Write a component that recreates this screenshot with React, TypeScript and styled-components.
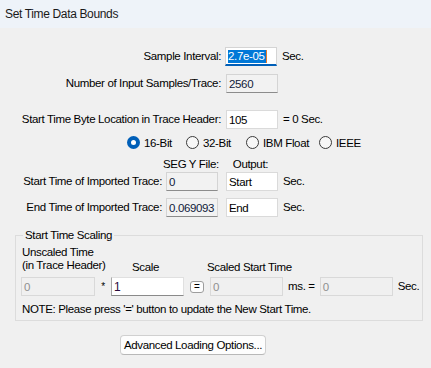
import React from "react";
import styled, { createGlobalStyle, css } from "styled-components";

const Global = createGlobalStyle`
  html, body { margin: 0; padding: 0; background: #f0f0f0; }
  body {
    font-family: "Liberation Sans", Arial, sans-serif;
    font-size: 11.5px;
    letter-spacing: -0.35px;
    color: #000;
  }
`;

const Window = styled.div`
  width: 431px;
  height: 368px;
  background: #f0f0f0;
  overflow: hidden;
  display: flex;
  flex-direction: column;
`;

const TitleBar = styled.div`
  height: 28px;
  flex: none;
  background: #eef3f9;
  padding-left: 5px;
  font-size: 12px;
  letter-spacing: -0.35px;
  line-height: 28px;
  color: #1a1a1a;
`;

const Row = styled.div<{ $mt: number; $h?: number }>`
  display: flex;
  align-items: center;
  height: ${(p) => p.$h ?? 19}px;
  margin-top: ${(p) => p.$mt}px;
  white-space: nowrap;
`;

const Label = styled.span<{ $w: number }>`
  flex: none;
  width: ${(p) => p.$w}px;
  text-align: right;
  line-height: 13px;
`;

const Unit = styled.span<{ $ml: number }>`
  margin-left: ${(p) => p.$ml}px;
  line-height: 13px;
`;

type Variant = "edit" | "readonly" | "disabled" | "focused" | "sunken";

const Box = styled.div<{ $w: number; $v: Variant; $ml?: number }>`
  flex: none;
  box-sizing: border-box;
  width: ${(p) => p.$w}px;
  height: 19px;
  margin-left: ${(p) => p.$ml ?? 0}px;
  padding-left: 2px;
  display: flex;
  align-items: center;
  border: 1px solid #dadada;
  background: #fff;
  color: #000;
  ${(p) =>
    p.$v === "readonly" &&
    css`
      background: #f2f2f2;
      border-color: #d4d4d4 #d4d4d4 #8c8c8c #d4d4d4;
      color: #101a3a;
    `}
  ${(p) =>
    p.$v === "disabled" &&
    css`
      background: #f0f0f0;
      border-color: #d9d9d9;
      color: #8f8f8f;
    `}
  ${(p) =>
    p.$v === "focused" &&
    css`
      border-color: #d4d4d4;
      border-bottom: 2px solid #005fb8;
    `}
  ${(p) =>
    p.$v === "sunken" &&
    css`
      border-color: #e0e0e0 #e0e0e0 #8a8a8a #a8a8a8;
      color: #2a0a3a;
      font-size: 12px;
    `}
`;

const Selected = styled.span`
  background: #0078d7;
  color: #fff;
  line-height: 13px;
  padding-right: 1px;
  border-right: 1px solid #e87a2a;
`;

const RadioGroup = styled.div`
  display: flex;
  align-items: center;
  margin-left: 127px;
`;

const RadioItem = styled.label<{ $w?: number }>`
  display: flex;
  align-items: center;
  gap: 4px;
  ${(p) => (p.$w ? `width: ${p.$w}px;` : "")}
  flex: none;
`;

const RadioCircle = styled.span<{ $checked?: boolean }>`
  width: 13px;
  height: 13px;
  box-sizing: border-box;
  border-radius: 50%;
  display: flex;
  align-items: center;
  justify-content: center;
  ${(p) =>
    p.$checked
      ? css`
          background: #005fb8;
          &::after {
            content: "";
            width: 5px;
            height: 5px;
            border-radius: 50%;
            background: #fff;
          }
        `
      : css`
          border: 1px solid #3a3a3a;
          background: #f7f7f7;
        `}
`;

const ColHead = styled.span<{ $ml: number }>`
  margin-left: ${(p) => p.$ml}px;
  line-height: 13px;
`;

const Group = styled.fieldset`
  box-sizing: border-box;
  width: 408px;
  margin: 12px 0 0 15px;
  padding: 0 0 4px 5px;
  border: 1px solid #dcdcdc;
  min-width: 0;
`;

const Legend = styled.legend`
  padding: 0 2px;
  margin-left: 2px;
  line-height: 13px;
`;

const ScaleHeader = styled.div`
  display: flex;
  align-items: flex-end;
  margin-top: 4px;
  padding-left: 1px;
`;

const HeadCell = styled.span<{ $w?: number; $drop?: number }>`
  ${(p) => (p.$w ? `width: ${p.$w}px; flex: none;` : "")}
  line-height: 13px;
  margin-bottom: ${(p) => -(p.$drop ?? 0)}px;
`;

const Star = styled.span`
  width: 16px;
  flex: none;
  text-align: center;
  font-size: 10px;
`;

const EqButton = styled.button`
  flex: none;
  box-sizing: border-box;
  width: 14px;
  height: 12px;
  margin-left: 6px;
  margin-right: 6px;
  padding: 0;
  border: 1px solid #9d9d9d;
  border-radius: 3px;
  background: #fdfdfd;
  font-family: "Liberation Sans", Arial, sans-serif;
  font-size: 10px;
  line-height: 10px;
  color: #000;
`;

const Note = styled.div`
  margin-top: 7px;
  padding-left: 1px;
  line-height: 13px;
`;

const ActionButton = styled.button`
  box-sizing: border-box;
  width: 146px;
  height: 20px;
  margin: 14px 0 0 120px;
  padding: 0;
  border: 1px solid #d0d0d0;
  border-bottom-color: #b8b8b8;
  border-radius: 4px;
  background: #fdfdfd;
  font-family: "Liberation Sans", Arial, sans-serif;
  font-size: 11.5px;
  letter-spacing: -0.35px;
  color: #000;
`;

const radios = [
  { label: "16-Bit", w: 59, checked: true },
  { label: "32-Bit", w: 60 },
  { label: "IBM Float", w: 73 },
  { label: "IEEE" },
];

export default function App() {
  return (
    <Window>
      <Global />
      <TitleBar>Set Time Data Bounds</TitleBar>

      <Row $mt={19}>
        <Label $w={221}>Sample Interval:</Label>
        <Box $w={52} $v="focused" $ml={4}>
          <Selected>2.7e-05</Selected>
        </Box>
        <Unit $ml={5}>Sec.</Unit>
      </Row>

      <Row $mt={8}>
        <Label $w={221}>Number of Input Samples/Trace:</Label>
        <Box $w={52} $v="readonly" $ml={5}>2560</Box>
      </Row>

      <Row $mt={17}>
        <Label $w={221}>Start Time Byte Location in Trace Header:</Label>
        <Box $w={52} $v="edit" $ml={5}>105</Box>
        <Unit $ml={5}>= 0 Sec.</Unit>
      </Row>

      <Row $mt={7} $h={13}>
        <RadioGroup>
          {radios.map((r) => (
            <RadioItem key={r.label} $w={r.w}>
              <RadioCircle $checked={r.checked} />
              {r.label}
            </RadioItem>
          ))}
        </RadioGroup>
      </Row>

      <Row $mt={9} $h={13}>
        <ColHead $ml={163}>SEG Y File:</ColHead>
        <ColHead $ml={14}>Output:</ColHead>
      </Row>

      <Row $mt={1}>
        <Label $w={162}>Start Time of Imported Trace:</Label>
        <Box $w={52} $v="readonly" $ml={4}>0</Box>
        <Box $w={52} $v="edit" $ml={8}>Start</Box>
        <Unit $ml={5}>Sec.</Unit>
      </Row>

      <Row $mt={7}>
        <Label $w={162}>End Time of Imported Trace:</Label>
        <Box $w={52} $v="readonly" $ml={4}>0.069093</Box>
        <Box $w={52} $v="edit" $ml={8}>End</Box>
        <Unit $ml={5}>Sec.</Unit>
      </Row>

      <Group>
        <Legend>Start Time Scaling</Legend>
        <ScaleHeader>
          <HeadCell $w={110}>
            Unscaled Time
            <br />
            (in Trace Header)
          </HeadCell>
          <HeadCell $w={75} $drop={2}>Scale</HeadCell>
          <HeadCell $drop={2}>Scaled Start Time</HeadCell>
        </ScaleHeader>
        <Row $mt={5}>
          <Box $w={74} $v="disabled">0</Box>
          <Star>*</Star>
          <Box $w={73} $v="sunken">1</Box>
          <EqButton>=</EqButton>
          <Box $w={73} $v="disabled">0</Box>
          <Unit $ml={5}>ms. =</Unit>
          <Box $w={73} $v="disabled" $ml={5}>0</Box>
          <Unit $ml={5}>Sec.</Unit>
        </Row>
        <Note>NOTE: Please press '=' button to update the New Start Time.</Note>
      </Group>

      <ActionButton>Advanced Loading Options...</ActionButton>
    </Window>
  );
}
